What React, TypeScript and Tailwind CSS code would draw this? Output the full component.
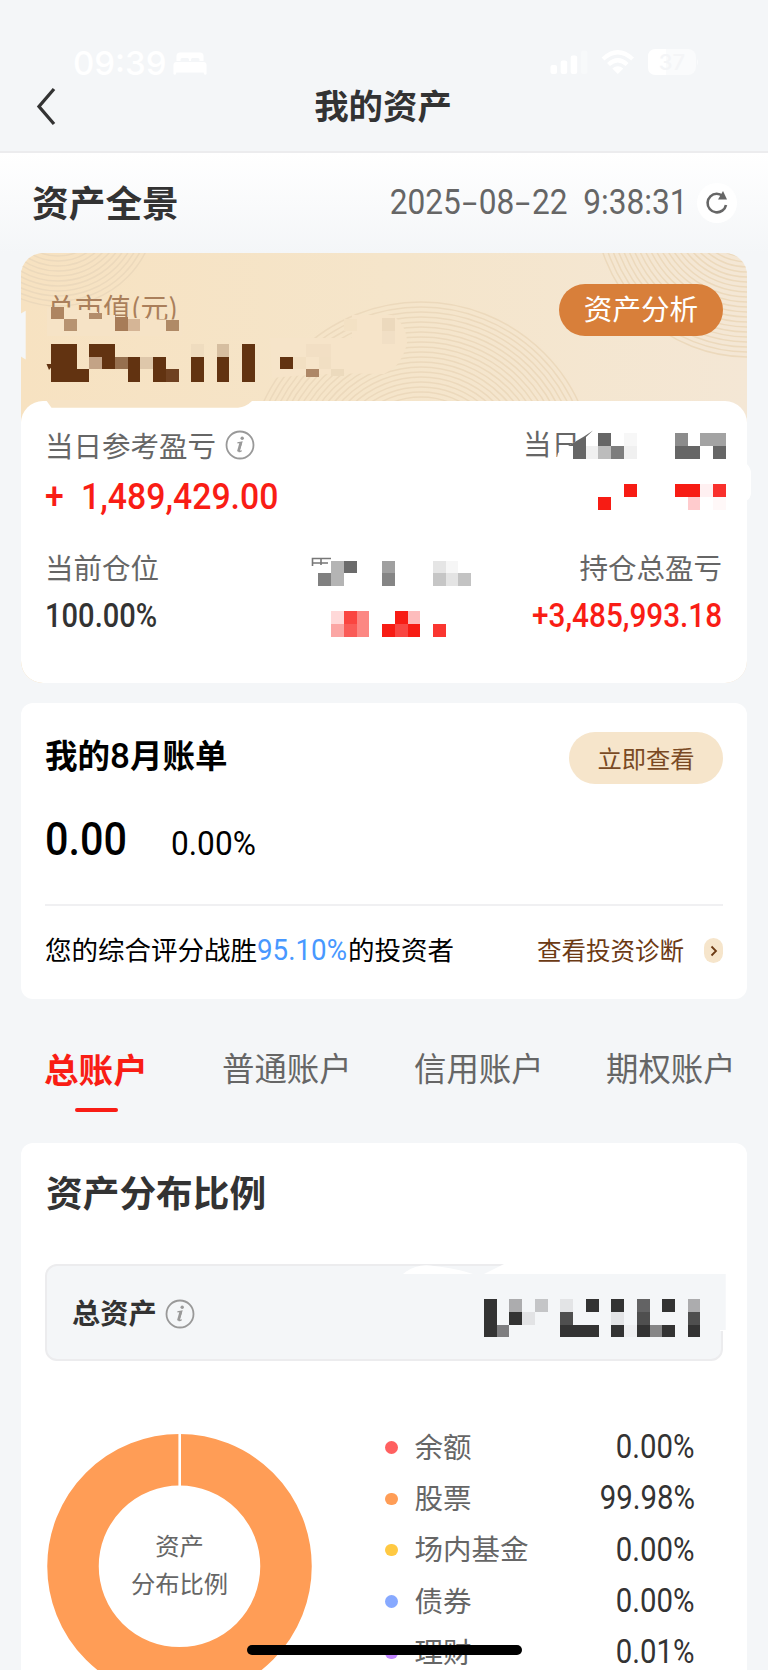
import { ReactNode } from 'react'
import clsx from 'clsx'

const legend = [
  { name: '余额', value: '0.00%', dot: 'bg-[#ff6060]' },
  { name: '股票', value: '99.98%', dot: 'bg-[#ff9d56]' },
  { name: '场内基金', value: '0.00%', dot: 'bg-[#ffc942]' },
  { name: '债券', value: '0.00%', dot: 'bg-[#87a9ff]' },
  { name: '理财', value: '0.01%', dot: 'bg-[#c084ff]' },
]

// x, y, width, height, fill
type Cell = [number, number, number, number, string]

const D = '#623311'
const valueCells: Cell[] = [
  [51, 307.3, 12.7, 11.4, '#ae8561'],
  [89.3, 312.7, 12.7, 6, '#b38d6b'],
  [63.7, 318.7, 13, 12.3, '#b79371'],
  [115, 316.7, 12.7, 14.3, '#a77c58'],
  [127.7, 318.7, 12.6, 12.3, '#d5b596'],
  [166, 320, 12.7, 11, '#b08a66'],
  [51, 344, 25.7, 38, D],
  [76.7, 369.3, 12.6, 12.7, D],
  [89.3, 344, 25.7, 12.7, D],
  [89.3, 356.7, 12.7, 12.6, '#c3a386'],
  [102, 356.7, 13, 12.6, D],
  [115, 356.7, 12.7, 12.6, '#96704f'],
  [127.7, 356.7, 12.6, 25.3, D],
  [140.3, 356.7, 12.7, 12.6, '#dec7aa'],
  [153, 356.7, 12.7, 25.3, D],
  [165.7, 369.3, 13, 12.7, '#6f4121'],
  [191, 344, 12.7, 12.7, '#efdcbf'],
  [191, 356.7, 12.7, 25.3, D],
  [216.7, 344, 12.6, 12.7, '#d6bea0'],
  [216.7, 356.7, 12.6, 25.3, D],
  [242, 344, 13, 38, D],
  [280.3, 356.7, 12.7, 12.6, D],
  [293, 356.7, 12.7, 12.6, '#f2dfc2'],
  [306, 344, 25.3, 12.7, '#f2dfc4'],
  [318.7, 356.7, 12.6, 12.6, '#f1dfc3'],
  [306, 369.3, 12.7, 7.7, '#ad8767'],
  [331.3, 369.3, 12.7, 6.7, '#ecdabd'],
  [344, 318.7, 12.7, 12.6, '#f3e1c4'],
  [382, 318, 13, 12.7, '#ecd9bd'],
  [382, 330.7, 13, 13.3, '#f1dfc5'],
]

const infoCells: Cell[] = [
  [573, 446, 13, 12.7, '#666'],
  [586, 446, 12.3, 12.7, '#f0f0f0'],
  [598.3, 433, 13, 13, '#666'],
  [598.3, 446, 13, 12.7, '#bcbcbc'],
  [611.3, 446, 12.7, 12.7, '#7d7d7d'],
  [624, 433, 13, 13, '#f7f7f7'],
  [624, 446, 13, 12.7, '#f0f0f0'],
  [675, 433, 12.7, 13, '#8c8c8c'],
  [675, 446, 25.3, 12.7, '#666'],
  [700.3, 433, 25.7, 13, '#a3a3a3'],
  [713, 446, 13, 12.7, '#666'],
  [624, 484, 13, 13, '#f71c14'],
  [598.3, 497, 13, 12.7, '#f71c14'],
  [675, 484, 25.3, 13, '#f71c14'],
  [700.3, 484, 12.7, 13, '#fff0f1'],
  [713, 484, 13, 13, '#f9302c'],
  [687.7, 497, 12.6, 12.7, '#ffcbcd'],
  [713, 497, 13, 12.7, '#fff8f8'],
  [331, 560.7, 13, 25, '#b4b4b4'],
  [344, 560.7, 12.7, 12.3, '#6b6b6b'],
  [318.3, 573, 12.7, 12.7, '#808080'],
  [382, 560.7, 13, 12.3, '#a0a0a0'],
  [382, 573, 13, 12.7, '#858585'],
  [433, 560.7, 13, 12.3, '#e5e5e5'],
  [446, 560.7, 12.3, 12.3, '#f6f6f6'],
  [433, 573, 13, 12.7, '#c6c6c6'],
  [446, 573, 12.3, 12.7, '#e4e4e4'],
  [458.3, 573, 12.7, 12.7, '#c3c3c3'],
  [331, 611, 13, 13, '#ffd9d9'],
  [344, 611, 12.7, 13, '#fa4540'],
  [356.7, 611, 12.6, 26, '#fc8783'],
  [331, 624, 13, 13, '#fba6a4'],
  [344, 624, 12.7, 13, '#fa5b57'],
  [395, 611, 12.7, 13, '#f71c14'],
  [407.7, 611, 12.3, 13, '#fdbcbc'],
  [382, 624, 13, 13, '#f71c14'],
  [395, 624, 12.7, 13, '#f94642'],
  [407.7, 624, 12.3, 13, '#f71c14'],
  [433, 624, 13, 13, '#fa3630'],
]

const K = '#333333'
const totalCells: Cell[] = [
  [484, 1299, 12.7, 38.3, K],
  [496.7, 1324.7, 12.6, 12.6, '#7e7e80'],
  [509.3, 1299, 12.7, 12.7, '#acacae'],
  [509.3, 1311.7, 12.7, 13, K],
  [522, 1311.7, 13, 13, '#e2e3e5'],
  [535, 1299, 12.7, 12.7, '#c4c5c7'],
  [560.3, 1299, 12.7, 12.7, '#e3e4e6'],
  [560.3, 1311.7, 12.7, 13, '#4f4f4f'],
  [560.3, 1324.7, 38.4, 12.6, K],
  [586, 1299, 12.7, 12.7, K],
  [611.3, 1299, 12.7, 12.7, K],
  [611.3, 1311.7, 12.7, 13, '#e3e4e6'],
  [611.3, 1324.7, 12.7, 12.6, K],
  [624, 1324.7, 12.7, 12.6, '#eeeff1'],
  [636.7, 1299, 12.9, 12.7, '#636364'],
  [636.7, 1311.7, 12.9, 13, '#4f4f4f'],
  [636.7, 1324.7, 12.9, 12.6, K],
  [649.6, 1324.7, 12.4, 12.6, '#868687'],
  [662, 1299, 13, 12.7, K],
  [662, 1324.7, 13, 12.6, K],
  [687.7, 1299, 12.7, 12.7, '#acacae'],
  [687.7, 1311.7, 12.7, 13, '#4f4f4f'],
  [687.7, 1324.7, 12.7, 12.6, K],
]

function Cells({ cells }: { cells: Cell[] }) {
  return (
    <g shapeRendering="crispEdges">
      {cells.map(([x, y, w, h, fill], i) => (
        <rect key={i} x={x} y={y} width={w} height={h} fill={fill} />
      ))}
    </g>
  )
}

function Rings({ cx, cy, r, count }: { cx: number; cy: number; r: number; count: number }) {
  return (
    <>
      {Array.from({ length: count }, (_, i) => (
        <circle key={i} cx={cx} cy={cy} r={r - i * 5} />
      ))}
    </>
  )
}

// Figures use a narrowed Roboto
function Num({ children, className }: { children: ReactNode; className?: string }) {
  return (
    <span className={clsx('inline-block whitespace-pre font-[Roboto] leading-none', className)}>{children}</span>
  )
}

function InfoIcon() {
  return (
    <svg width="30" height="30" viewBox="0 0 30 30" fill="none" className="shrink-0">
      <circle cx="15" cy="15" r="13.5" stroke="#999" strokeWidth="1.8" />
      <circle cx="17.2" cy="8.3" r="1.7" fill="#999" />
      <path d="M12.4 12.8L16.8 12L14 21Q13.6 22.6 16.6 20.6" stroke="#999" strokeWidth="1.3" />
      <path d="M15.8 12.6L13.3 21.5" stroke="#999" strokeWidth="2.6" />
    </svg>
  )
}

function StatusBar() {
  return (
    <div className="flex h-[76px] items-end pl-[73px] pr-[70px] text-white">
      <span className="w-[100px] font-[Inter] text-[33px] leading-[26px] font-medium">09:39</span>
      <svg width="34" height="24" viewBox="0 0 34 24" fill="currentColor">
        <path d="M3.5 9V4Q3.5 .5 7 .5H27Q30.5 .5 30.5 4V9H26.5V7.5Q26.5 6 25 6H19.5Q18 6 18 7.500V9H16V7.500Q16 6 14.500 6H9Q7.500 6 7.500 7.500V9Z" />
        <path d="M.5 22V13Q.5 10 3.500 10H30.500Q33.500 10 33.500 13V22Q33.500 22.800 32 22.800Q30.700 22.800 30.700 20.500H3.300Q3.300 22.800 2 22.800Q.5 22.800 .5 22Z" />
      </svg>
      <svg width="150" height="28" viewBox="0 0 150 28" className="ml-auto" fill="currentColor">
        <rect x="2.500" y="17" width="6.500" height="9" rx="2" />
        <rect x="12.700" y="12.500" width="6.500" height="13.500" rx="2" />
        <rect x="22.700" y="7.500" width="6.500" height="18.500" rx="2" />
        <rect x="33" y="2.500" width="6.500" height="23.500" rx="2" opacity=".3" />
        <g fill="none" stroke="currentColor" strokeWidth="4.200">
          <path d="M55 11Q69.800 -2.500 84.600 11" />
          <path d="M60.500 16.500Q69.800 8 79.100 16.500" />
        </g>
        <path d="M64.300 20.500Q69.800 16 75.300 20.500L69.800 26Z" />
        <rect x="100" y="1" width="48" height="26" rx="8" opacity=".55" />
        <path d="M118 1V27H108Q100 27 100 19V9Q100 1 108 1Z" />
        <text x="124" y="22" textAnchor="middle" fontFamily="Inter" fontSize="22" fontWeight="500" fill="#f4f5f7">
          37
        </text>
        <path d="M149 11Q152 14 149 17Z" opacity=".5" />
      </svg>
    </div>
  )
}

function NavBar() {
  return (
    <div className="flex h-[77px] items-start justify-between border-b-2 border-[#ececee] px-9">
      <svg width="22" height="40" viewBox="0 0 22 40" fill="none" className="mt-[11px]">
        <path d="M18 2L3 19.500L18 37" stroke="#333" strokeWidth="3.300" />
      </svg>
      <h1 className="mt-[10px] text-[34.400px] leading-[36px] font-bold text-[#333]">我的资产</h1>
      <div className="w-[24px]" />
    </div>
  )
}

function SummaryCard() {
  return (
    <section className="relative mx-[21px] h-[430px] overflow-hidden rounded-[22px] bg-linear-to-r from-[#f7e2c1] via-[#f5e5ca] to-[#f4e7d5]">
      <svg width="726" height="180" viewBox="21 253 726 180" className="absolute top-0 left-0" fill="none" stroke="#ecd9bc" strokeWidth="1.500">
        <Rings cx={58} cy={208} r={98} count={18} />
        <Rings cx={748} cy={204} r={153} count={28} />
        <Rings cx={421} cy={476} r={174} count={20} />
      </svg>
      <div className="relative flex h-[148px] items-start justify-between pt-[31px] pr-6 pl-[26px]">
        <span className="mt-[9px] text-[28px] leading-[28px] text-[#aa7f5b]">总市值(元)</span>
        <button className="h-[52px] w-[164px] rounded-full bg-[#d87f3a] pb-[5px] text-[28.600px] leading-[44px] text-white">资产分析</button>
      </div>
      <div className="relative h-[282px] rounded-[22px] bg-white pr-[25px] pl-6 pt-[29px] text-[28.500px] leading-[30px] text-[#666]">
        <div className="flex justify-between">
          <div className="flex items-center gap-[9px]">
            当日参考盈亏
            <InfoIcon />
          </div>
          <span className="-mt-0.5 mr-[142px]">当日</span>
        </div>
        <Num className="mt-[18px] block w-[300px] origin-left scale-x-[.913] text-[37px] font-medium text-[#f91d15]">
          <span className="mr-[19px]">+</span>1,489,429.00
        </Num>
        <div className="mt-[37px] flex justify-between">
          <span>当前仓位</span>
          <span>持仓总盈亏</span>
        </div>
        <div className="mt-[17px] flex justify-between">
          <Num className="origin-left scale-x-[.882] text-[33px] font-medium text-[#333]">100.00%</Num>
          <Num className="origin-right scale-x-[.9] text-[33px] font-medium text-[#f91d15]">+3,485,993.18</Num>
        </div>
      </div>
    </section>
  )
}

// Pixelated areas that hide private amounts
function SummaryMask() {
  return (
    <svg width="768" height="440" viewBox="0 248 768 440" className="pointer-events-none absolute top-[-5px] left-0">
      <path d="M47 307.500H76V310H89L98 312V315H115V318H147V319.500H182V336H47Z" fill="#f6e3c6" />
      <path d="M270 338H352V315H392Q407 325 407 343Q404 358 394 368L384 374Q330 372 272 378Z" fill="#f6e4c9" />
      <path d="M46 400L51.500 407.700H238Q246 407 252 401V400Z" fill="#f6e3c6" />
      <path d="M20 314L25.700 310.700V359.500L20 356Z" fill="#f4f6f8" />
      <path d="M46.500 364H54L49 370Z" fill={D} />
      <path d="M746 463Q751 468 751 473V493Q751 498 746 501Z" fill="#fff" />
      <path d="M558 453L569 445.500L595 430H640V462H556Z" fill="#fff" />
      <path d="M568 446L584 436.500L593 430.500L586 437V446Z" fill="#666" />
      <path d="M312.500 566V558.500H331M312.500 563H328M321 558.500V565" fill="none" stroke="#777" strokeWidth="1.600" />
      <Cells cells={valueCells} />
      <Cells cells={infoCells} />
    </svg>
  )
}

function BillCard() {
  return (
    <section className="mx-[21px] mt-5 h-[296px] rounded-[12px] bg-white px-6 pt-[29px] text-black">
      <div className="flex items-start justify-between">
        <h2 className="mt-[5px] text-[32.500px] leading-[34px] font-bold">
          我的<span className="font-[Roboto] text-[35px] font-medium">8</span>月账单
        </h2>
        <button className="h-[52px] w-[154px] rounded-full bg-[#f6e5cb] text-[24.300px] leading-[50px] text-[#7a4a24]">立即查看</button>
      </div>
      <div className="mt-[31px] flex items-baseline">
        <Num className="w-[126px] origin-left scale-x-[.88] text-[47px] font-medium">0.00</Num>
        <Num className="origin-left scale-x-[.93] text-[34px]">0.00%</Num>
      </div>
      <div className="mt-[42px] h-[2px] bg-[#f0f0f2]" />
      <div className="mt-7 flex items-center justify-between leading-[30px]">
        <p className="text-[26.500px] whitespace-nowrap">
          您的综合评分战胜
          <span className="inline-block w-[91px]">
            <Num className="origin-left scale-x-[.94] text-[29.500px] text-[#4898ff]">95.10%</Num>
          </span>
          的投资者
        </p>
        <div className="flex items-center gap-5 text-[24.500px] text-[#6c3a14]">
          查看投资诊断
          <span className="mt-0.5 flex h-[25px] w-[19px] items-center justify-center rounded-full bg-[#f6e5cb]">
            <svg width="8" height="12" viewBox="0 0 8 12" fill="none">
              <path d="M1.500 1.500L6 6L1.500 10.500" stroke="#6c3a14" strokeWidth="1.800" />
            </svg>
          </span>
        </div>
      </div>
    </section>
  )
}

function Tabs() {
  return (
    <nav className="flex h-[144px] items-start pt-[51px] pl-11 text-[32.400px] leading-[34px] whitespace-nowrap text-[#666]">
      <div className="flex w-[178px] flex-col items-start">
        <span className="pt-px text-[34.600px] font-bold text-[#f91d15]">总账户</span>
        <span className="mt-[23px] ml-[31px] h-1 w-[43px] rounded-full bg-[#f91d15]" />
      </div>
      <span className="w-[192px]">普通账户</span>
      <span className="w-[192px]">信用账户</span>
      <span>期权账户</span>
    </nav>
  )
}

function Distribution() {
  return (
    <section className="relative mx-[21px] h-[600px] rounded-t-[12px] bg-white px-6 pt-[29px]">
      <h2 className="pl-px text-[36.700px] leading-[38px] font-bold text-[#333]">资产分布比例</h2>
      <div className="mt-[54px] flex h-[97px] items-center gap-2 rounded-[12px] border-2 border-[#ececee] bg-[#f4f6f8] pl-[25px] text-[28.200px] font-bold text-[#333]">
        总资产
        <span className="mt-[3px]">
          <InfoIcon />
        </span>
      </div>
      <svg width="726" height="110" viewBox="21 1258 726 110" className="pointer-events-none absolute top-[115px] left-0">
        <path d="M484 1274L506 1263H727V1331H720V1274Z" fill="#fff" />
        <path d="M403 1274Q415 1264 430 1265.500Q456 1268 473 1274Z" fill="#fff" />
        <path d="M484 1274H725.700V1330H720V1335H600V1274Z" fill="#f4f6f8" />
        <Cells cells={totalCells} />
      </svg>
      <div className="flex pt-[61px]">
        <div className="relative mt-3 ml-[2px] h-[265px] w-[265px]">
          <svg width="265" height="265" viewBox="0 0 265 265" fill="none">
            <circle cx="132.500" cy="132.300" r="106.500" stroke="#ff9d56" strokeWidth="51.500" />
            <path d="M132.700 0V53" stroke="#fff" strokeWidth="2.600" />
          </svg>
          <p className="absolute inset-x-0 top-[92px] text-center text-[24.300px] leading-[37.700px] text-[#666]">
            资产
            <br />
            分布比例
          </p>
        </div>
        <ul className="-mt-px ml-[73px]">
          {legend.map((item) => (
            <li key={item.name} className="flex h-[51.300px] w-[310px] items-center pb-0.5 text-[28.500px] leading-[30px] text-[#666]">
              <span className={clsx('mt-1 mr-[17px] h-[12.500px] w-[12.500px] rounded-full', item.dot)} />
              {item.name}
              <Num className="mt-0.5 ml-auto origin-right scale-x-[.89] text-[33px] text-[#333]">{item.value}</Num>
            </li>
          ))}
        </ul>
      </div>
    </section>
  )
}

export default function App() {
  return (
    <div className="relative h-[1670px] w-[768px] overflow-hidden bg-[#f4f6f8] font-['Noto_Sans_CJK_SC',sans-serif]">
      <StatusBar />
      <NavBar />
      <div className="flex h-[100px] items-center justify-between bg-linear-to-b from-white to-[#f4f6f8] pr-[31px] pl-8">
        <h2 className="-mt-1 text-[36.700px] leading-[38px] font-bold text-[#333]">资产全景</h2>
        <div className="flex items-center">
          <Num className="-mt-0.5 origin-right scale-x-[.912] text-[34.700px] text-[#666]">
            2025<span className="inline-block w-[19.500px] scale-x-[1.700] text-center">-</span>08
            <span className="inline-block w-[19.500px] scale-x-[1.700] text-center">-</span>22{'  '}9:38:31
          </Num>
          <span className="ml-[10px] flex h-10 w-10 items-center justify-center rounded-full bg-white">
            <svg width="22" height="24" viewBox="0 0 22 24" fill="none">
              <path d="M16.500 5Q14 2.800 10.700 2.800A9.300 9.300 0 1 0 20 14" stroke="#666" strokeWidth="2.600" />
              <path d="M17 0L21 8.500L12 8.500Z" fill="#666" />
            </svg>
          </span>
        </div>
      </div>
      <div className="relative">
        <SummaryCard />
        <SummaryMask />
      </div>
      <BillCard />
      <Tabs />
      <Distribution />
      <div className="absolute bottom-[15.500px] left-[246.500px] h-[9.500px] w-[275px] rounded-full bg-black" />
    </div>
  )
}
